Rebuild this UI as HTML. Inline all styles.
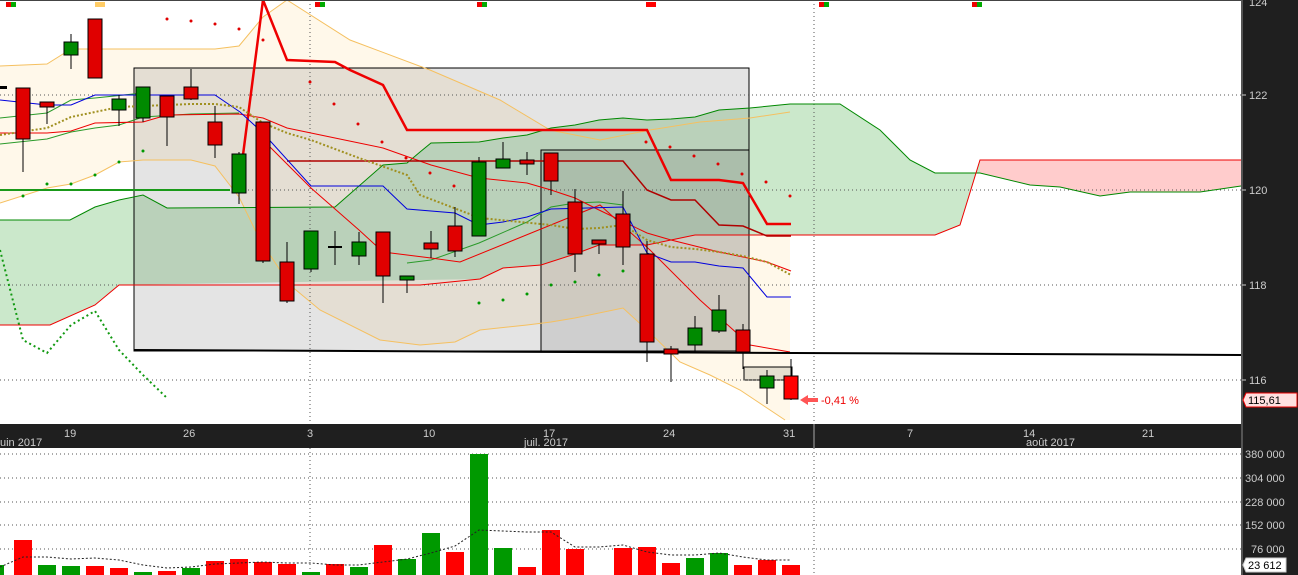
<!DOCTYPE html><html><head><meta charset="utf-8"><style>
html,body{margin:0;padding:0;background:#fff;overflow:hidden}
svg{display:block;font-family:"Liberation Sans",sans-serif}
</style></head><body>
<svg width="1298" height="575" viewBox="0 0 1298 575" xmlns="http://www.w3.org/2000/svg">
<rect width="1298" height="575" fill="#fff"/>
<!-- bollinger fill -->
<polygon fill="#fff8ea" points="0,66 47,64 71,49 95,49 143,49 215,49 239,46 263,17 287,0 350,40 430,70 500,100 550,130 600,140 650,130 700,122 750,118 790,112 790,420 785,420 770,410 740,390 710,375 680,362 647,330 623,308 575,318 551,322 527,325 480,330 455,342 420,345 380,340 320,310 290,285 260,240 239,197 215,166 191,160 143,160 119,162 95,175 71,184 47,188 0,203"/>
<!-- cloud green -->
<polygon fill="#cbe8cb" points="0,220 70,220 95,207 119,200 143,195 167,208 335,207 383,165 407,163 420,152 431,143 479,142 503,138 527,135 551,128 575,125 599,120 623,118 647,120 671,119 695,117 719,110 750,108 790,104 840,104 880,130 910,160 935,173 980,173 980,160 960,225 935,235 750,235 695,235 647,245 599,245 575,254 541,265 503,268 480,279 420,280 119,285 95,305 50,325 0,325"/>
<polygon fill="#ffcccc" points="980,160 1241,160 1241,186 1200,192 1130,192 1100,196 1060,187 1030,185 980,173"/>
<!-- boxes -->
<rect x="134" y="68" width="615" height="283" fill="rgba(120,120,120,0.2)" stroke="#000" stroke-width="1"/>
<rect x="541" y="150" width="208" height="201" fill="rgba(90,90,90,0.15)" stroke="#000" stroke-width="1"/>
<rect x="744" y="367" width="48" height="13" fill="rgba(120,120,100,0.2)" stroke="#000" stroke-width="1"/>
<!-- grid -->
<g stroke="#555" stroke-width="1" stroke-dasharray="1,3">
<line x1="0" y1="95" x2="1241" y2="95"/><line x1="0" y1="190" x2="1241" y2="190"/><line x1="0" y1="285" x2="1241" y2="285"/><line x1="0" y1="380" x2="1241" y2="380"/>
<line x1="310" y1="0" x2="310" y2="424"/><line x1="814" y1="0" x2="814" y2="424"/>
<line x1="0" y1="454" x2="1241" y2="454"/><line x1="0" y1="478" x2="1241" y2="478"/><line x1="0" y1="502" x2="1241" y2="502"/><line x1="0" y1="525" x2="1241" y2="525"/><line x1="0" y1="549" x2="1241" y2="549"/>
<line x1="310" y1="448" x2="310" y2="575"/><line x1="814" y1="448" x2="814" y2="575"/>
</g>
<!-- lines -->
<g fill="none">
<polyline stroke="#f5c060" stroke-width="1" points="0,66 47,64 71,49 95,49 143,49 215,49 239,46 263,17 287,0 350,40 430,70 500,100 550,130 600,140 650,130 700,122 750,118 790,112"/>
<polyline stroke="#f5c060" stroke-width="1" points="0,203 47,188 71,184 95,175 119,162 143,160 191,160 215,166 239,197 260,240 290,285 320,310 380,340 420,345 455,342 480,330 527,325 551,322 575,318 623,308 647,330 680,362 710,375 740,390 770,410 785,420"/>
<polyline stroke="#008800" stroke-width="1" points="0,220 70,220 95,207 119,200 143,195 167,208 335,207 383,165 407,163 420,152 431,143 479,142 503,138 527,135 551,128 575,125 599,120 623,118 647,120 671,119 695,117 719,110 750,108 790,104 840,104 880,130 910,160 935,173 980,173 1030,185 1060,187 1100,196 1130,192 1200,192 1241,186"/>
<polyline stroke="#ee0000" stroke-width="1" points="0,325 50,325 95,305 119,285 420,285 480,279 503,268 541,265 575,254 599,245 647,245 695,235 750,235 935,235 960,225 980,160 1241,160"/>
<polyline stroke="#1a9a1a" stroke-width="2" points="0,190 230,190"/>
<polyline stroke="#2a9a2a" stroke-width="1" points="0,144 47,139 71,132 95,128 119,125 143,117 191,114 239,113"/>
<polyline stroke="#2a9a2a" stroke-width="1" points="0,118 47,113 71,100 95,98 143,93"/>
<polyline stroke="#2a9a2a" stroke-width="1" points="407,263 431,260 479,243 527,222 551,207 575,203 599,202 623,205"/>
<polyline stroke="#ee0000" stroke-width="1" points="0,133 47,133 71,131 95,123 143,122 167,115 239,114 263,118 287,128 335,138 383,148 431,165 479,178 527,183 551,190 575,198 599,210 647,233 671,240 719,252 743,257 767,262 791,271"/>
<polyline stroke="#b00000" stroke-width="1.5" points="287,161 623,161 647,190 671,200 695,200 719,225 743,226 767,236 791,236"/>
<polyline stroke="#ee0000" stroke-width="1" points="263,140 311,188 359,230 383,252 431,258 460,262 600,205 650,250 700,300 750,345 790,352"/>
<polyline stroke="#ee0000" stroke-width="2.5" points="243,155 263,0 287,60 335,62 350,70 383,85 407,130 647,130 671,180 719,180 743,183 767,224 791,224"/>
<polyline stroke="#0000dd" stroke-width="1" points="0,100 47,105 71,105 95,95 143,95 215,95 240,112 263,133 311,186 383,186 407,209 455,213 479,225 503,222 527,217 551,209 623,207 647,253 671,262 695,262 719,266 743,268 767,297 791,297"/>
<polyline stroke="#a09020" stroke-width="2" stroke-dasharray="2,2" points="0,135 47,128 71,117 95,112 119,107 143,106 191,104 215,104 239,107 263,123 287,133 311,140 359,158 407,175 420,195 480,218 551,225 575,229 599,228 623,225 647,240 671,247 695,249 719,252 743,256 767,262 791,275"/>
<polyline stroke="#119911" stroke-width="2" stroke-dasharray="2,3" points="0,250 23,340 47,353 71,325 95,311 119,350 143,375 167,398"/>
<line x1="134" y1="350" x2="1241" y2="355" stroke="#000" stroke-width="2"/>
</g>
<!-- SAR dots -->
<g fill="#e00000">
<circle cx="167" cy="19" r="1.5"/><circle cx="191" cy="21" r="1.5"/><circle cx="215" cy="24" r="1.5"/><circle cx="239" cy="29" r="1.5"/><circle cx="263" cy="40" r="1.5"/><circle cx="310" cy="82" r="1.5"/><circle cx="334" cy="104" r="1.5"/><circle cx="358" cy="124" r="1.5"/><circle cx="382" cy="142" r="1.5"/><circle cx="406" cy="158" r="1.5"/><circle cx="430" cy="173" r="1.5"/><circle cx="454" cy="186" r="1.5"/><circle cx="646" cy="142" r="1.5"/><circle cx="670" cy="147" r="1.5"/><circle cx="694" cy="156" r="1.5"/><circle cx="718" cy="164" r="1.5"/><circle cx="742" cy="174" r="1.5"/><circle cx="766" cy="182" r="1.5"/><circle cx="790" cy="196" r="1.5"/>
</g>
<g fill="#009900">
<circle cx="23" cy="196" r="1.5"/><circle cx="47" cy="184" r="1.5"/><circle cx="71" cy="184" r="1.5"/><circle cx="95" cy="175" r="1.5"/><circle cx="119" cy="162" r="1.5"/><circle cx="143" cy="151" r="1.5"/><circle cx="479" cy="303" r="1.5"/><circle cx="503" cy="300" r="1.5"/><circle cx="527" cy="294" r="1.5"/><circle cx="551" cy="285" r="1.5"/><circle cx="575" cy="282" r="1.5"/><circle cx="599" cy="275" r="1.5"/><circle cx="623" cy="271" r="1.5"/>
</g>
<!-- candles -->
<g stroke="#000" stroke-width="1">
<line x1="23" y1="88" x2="23" y2="172"/><rect x="16" y="88" width="14" height="51" fill="#e00000"/>
<line x1="47" y1="102" x2="47" y2="124"/><rect x="40" y="102" width="14" height="5" fill="#e00000"/>
<line x1="71" y1="34" x2="71" y2="69"/><rect x="64" y="42" width="14" height="13" fill="#008a00"/>
<rect x="88" y="19" width="14" height="59" fill="#e00000"/>
<line x1="119" y1="95" x2="119" y2="126"/><rect x="112" y="99" width="14" height="11" fill="#008a00"/>
<line x1="143" y1="87" x2="143" y2="122"/><rect x="136" y="87" width="14" height="31" fill="#008a00"/>
<line x1="167" y1="96" x2="167" y2="146"/><rect x="160" y="96" width="14" height="21" fill="#e00000"/>
<line x1="191" y1="69" x2="191" y2="100"/><rect x="184" y="87" width="14" height="12" fill="#e00000"/>
<line x1="215" y1="106" x2="215" y2="158"/><rect x="208" y="122" width="14" height="23" fill="#e00000"/>
<line x1="239" y1="152" x2="239" y2="204"/><rect x="232" y="154" width="14" height="39" fill="#008a00"/>
<line x1="263" y1="122" x2="263" y2="263"/><rect x="256" y="122" width="14" height="139" fill="#e00000"/>
<line x1="287" y1="242" x2="287" y2="303"/><rect x="280" y="262" width="14" height="39" fill="#e00000"/>
<line x1="311" y1="231" x2="311" y2="272"/><rect x="304" y="231" width="14" height="38" fill="#008a00"/>
<line x1="335" y1="231" x2="335" y2="265"/><line x1="328" y1="247" x2="342" y2="247" stroke-width="2"/>
<line x1="359" y1="232" x2="359" y2="265"/><rect x="352" y="242" width="14" height="14" fill="#008a00"/>
<line x1="383" y1="232" x2="383" y2="303"/><rect x="376" y="232" width="14" height="44" fill="#e00000"/>
<line x1="407" y1="276" x2="407" y2="293"/><rect x="400" y="276" width="14" height="4" fill="#008a00"/>
<line x1="431" y1="231" x2="431" y2="258"/><rect x="424" y="243" width="14" height="6" fill="#e00000"/>
<line x1="455" y1="207" x2="455" y2="257"/><rect x="448" y="226" width="14" height="25" fill="#e00000"/>
<line x1="479" y1="157" x2="479" y2="236"/><rect x="472" y="162" width="14" height="74" fill="#008a00"/>
<line x1="503" y1="142" x2="503" y2="168"/><rect x="496" y="159" width="14" height="9" fill="#008a00"/>
<line x1="527" y1="152" x2="527" y2="175"/><rect x="520" y="160" width="14" height="4" fill="#e00000"/>
<line x1="551" y1="153" x2="551" y2="195"/><rect x="544" y="153" width="14" height="28" fill="#e00000"/>
<line x1="575" y1="189" x2="575" y2="272"/><rect x="568" y="202" width="14" height="52" fill="#e00000"/>
<line x1="599" y1="240" x2="599" y2="254"/><rect x="592" y="240" width="14" height="4" fill="#e00000"/>
<line x1="623" y1="191" x2="623" y2="265"/><rect x="616" y="214" width="14" height="33" fill="#e00000"/>
<line x1="647" y1="241" x2="647" y2="362"/><rect x="640" y="254" width="14" height="88" fill="#e00000"/>
<line x1="671" y1="346" x2="671" y2="382"/><rect x="664" y="349" width="14" height="5" fill="#e00000"/>
<line x1="695" y1="316" x2="695" y2="352"/><rect x="688" y="328" width="14" height="17" fill="#008a00"/>
<line x1="719" y1="295" x2="719" y2="333"/><rect x="712" y="310" width="14" height="21" fill="#008a00"/>
<line x1="743" y1="324" x2="743" y2="369"/><rect x="736" y="330" width="14" height="22" fill="#e00000"/>
<line x1="767" y1="370" x2="767" y2="404"/><rect x="760" y="376" width="14" height="12" fill="#008a00"/>
<line x1="791" y1="359" x2="791" y2="400"/><rect x="784" y="376" width="14" height="23" fill="#ff0000"/>
</g>
<rect x="0" y="86" width="7" height="3" fill="#000"/>
<!-- arrow & pct -->
<polygon points="800,400 808,395 808,398 818,398 818,402 808,402 808,405" fill="#f55"/>
<text x="821" y="404" font-size="11" fill="#ee0000">-0,41 %</text>
<!-- top markers -->
<rect x="0" y="0" width="1241" height="1" fill="#444"/>
<g>
<rect x="6" y="2" width="5" height="5" fill="#e00"/><rect x="11" y="2" width="5" height="5" fill="#0a0"/>
<rect x="95" y="2" width="10" height="5" fill="#fc6"/>
<rect x="315" y="2" width="5" height="5" fill="#e00"/><rect x="320" y="2" width="5" height="5" fill="#0a0"/>
<rect x="477" y="2" width="5" height="5" fill="#e00"/><rect x="482" y="2" width="5" height="5" fill="#0a0"/>
<rect x="646" y="2" width="10" height="5" fill="#f00"/>
<rect x="819" y="2" width="5" height="5" fill="#e00"/><rect x="824" y="2" width="5" height="5" fill="#0a0"/>
<rect x="972" y="2" width="5" height="5" fill="#e00"/><rect x="977" y="2" width="5" height="5" fill="#0a0"/>
</g>
<!-- date bar -->
<rect x="0" y="424" width="1241" height="24" fill="#1f1f1f"/>
<line x1="814" y1="424" x2="814" y2="448" stroke="#aaa"/>
<g fill="#ccc" font-size="11">
<text x="0" y="446">uin 2017</text>
<text x="64" y="437">19</text><text x="183" y="437">26</text><text x="307" y="437">3</text><text x="423" y="437">10</text><text x="543" y="437">17</text><text x="524" y="446">juil. 2017</text><text x="663" y="437">24</text><text x="783" y="437">31</text><text x="907" y="437">7</text><text x="1023" y="437">14</text><text x="1026" y="446">août 2017</text><text x="1142" y="437">21</text>
</g>
<!-- volume -->
<g stroke-width="0.5">
<rect x="0" y="565" width="4" height="10" fill="#009900"/>
<rect x="14" y="540" width="18" height="35" fill="#f00"/>
<rect x="38" y="565" width="18" height="10" fill="#009900"/>
<rect x="62" y="566" width="18" height="9" fill="#009900"/>
<rect x="86" y="566" width="18" height="9" fill="#f00"/>
<rect x="110" y="568" width="18" height="7" fill="#f00"/>
<rect x="134" y="572" width="18" height="3" fill="#009900"/>
<rect x="158" y="571" width="18" height="4" fill="#f00"/>
<rect x="182" y="568" width="18" height="7" fill="#009900"/>
<rect x="206" y="561" width="18" height="14" fill="#f00"/>
<rect x="230" y="559" width="18" height="16" fill="#f00"/>
<rect x="254" y="562" width="18" height="13" fill="#f00"/>
<rect x="278" y="564" width="18" height="11" fill="#f00"/>
<rect x="302" y="572" width="18" height="3" fill="#009900"/>
<rect x="326" y="564" width="18" height="11" fill="#f00"/>
<rect x="350" y="567" width="18" height="8" fill="#009900"/>
<rect x="374" y="545" width="18" height="30" fill="#f00"/>
<rect x="398" y="559" width="18" height="16" fill="#009900"/>
<rect x="422" y="533" width="18" height="42" fill="#009900"/>
<rect x="446" y="552" width="18" height="23" fill="#f00"/>
<rect x="470" y="454" width="18" height="121" fill="#009900"/>
<rect x="494" y="548" width="18" height="27" fill="#009900"/>
<rect x="518" y="567" width="18" height="8" fill="#f00"/>
<rect x="542" y="530" width="18" height="45" fill="#f00"/>
<rect x="566" y="549" width="18" height="26" fill="#f00"/>
<rect x="614" y="548" width="18" height="27" fill="#f00"/>
<rect x="638" y="547" width="18" height="28" fill="#f00"/>
<rect x="662" y="563" width="18" height="12" fill="#f00"/>
<rect x="686" y="558" width="18" height="17" fill="#009900"/>
<rect x="710" y="553" width="18" height="22" fill="#009900"/>
<rect x="734" y="565" width="18" height="10" fill="#f00"/>
<rect x="758" y="560" width="18" height="15" fill="#f00"/>
<rect x="782" y="565" width="18" height="10" fill="#f00"/>
</g>
<polyline fill="none" stroke="#222" stroke-width="1" stroke-dasharray="2,2" points="0,567 23,557 47,557 71,559 95,558 119,560 143,565 167,568 191,567 215,564 239,563 263,562 287,563 311,563 335,565 359,565 383,562 407,559 431,553 455,546 479,530 503,531 527,532 551,532 575,547 599,547 623,545 647,552 671,555 695,555 719,553 743,557 767,560 791,560"/>
<!-- right axis -->
<rect x="1241" y="0" width="57" height="575" fill="#1f1f1f"/>
<line x1="1242" y1="0" x2="1242" y2="575" stroke="#888"/>
<g fill="#ccc" font-size="11">
<text x="1249" y="6">124</text><text x="1249" y="99">122</text><text x="1249" y="194">120</text><text x="1249" y="289">118</text><text x="1249" y="384">116</text>
<text x="1245" y="458">380 000</text><text x="1245" y="482">304 000</text><text x="1245" y="506">228 000</text><text x="1245" y="529">152 000</text><text x="1251" y="553">76 000</text>
</g>
<g stroke="#ccc"><line x1="1242" y1="95" x2="1246" y2="95"/><line x1="1242" y1="190" x2="1246" y2="190"/><line x1="1242" y1="285" x2="1246" y2="285"/><line x1="1242" y1="380" x2="1246" y2="380"/></g>
<polygon points="1243,400 1246,393 1297,393 1297,407 1246,407" fill="#ffe0e0" stroke="#e00"/>
<text x="1248" y="404" font-size="11" fill="#000">115,61</text>
<polygon points="1243,565 1246,558 1286,558 1286,572 1246,572" fill="#fff" stroke="#ccc"/>
<text x="1248" y="569" font-size="11" fill="#000">23 612</text>
</svg>
</body></html>
